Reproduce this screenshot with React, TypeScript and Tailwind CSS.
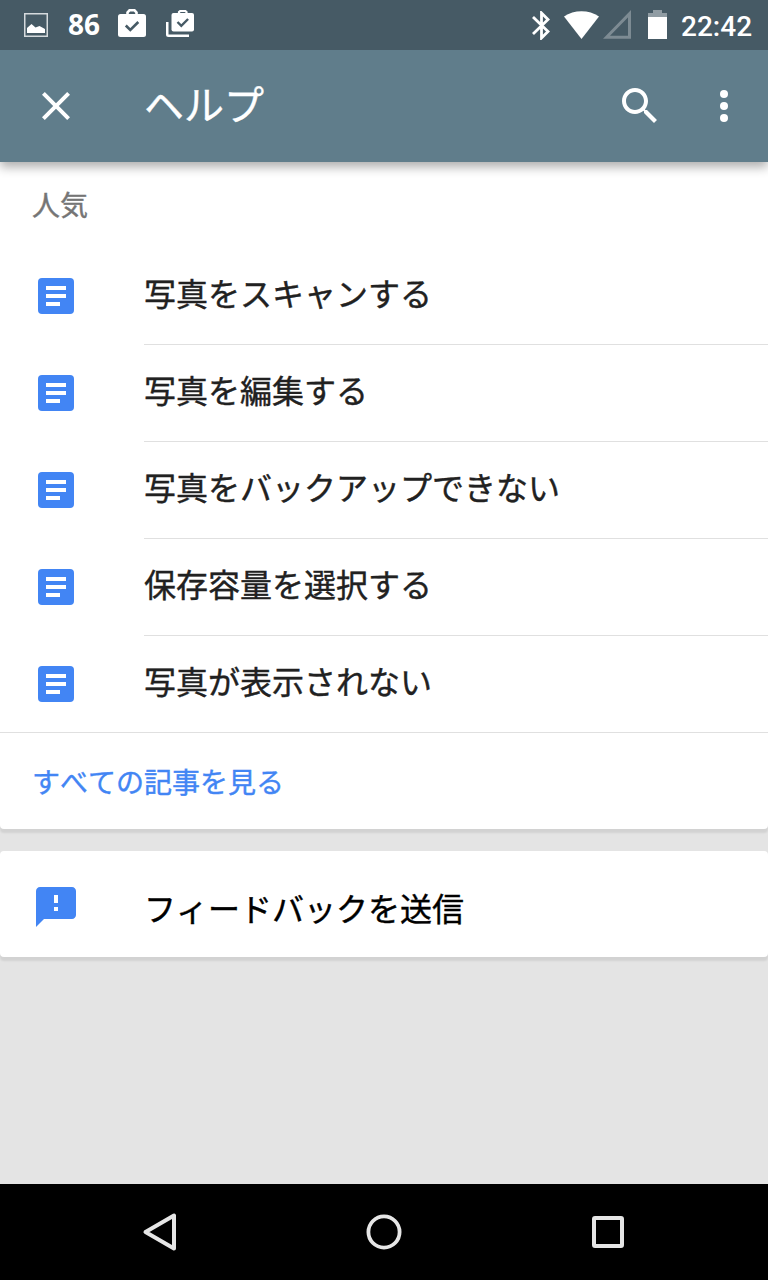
import type { ReactNode } from 'react';

const articles = [
  '写真をスキャンする',
  '写真を編集する',
  '写真をバックアップできない',
  '保存容量を選択する',
  '写真が表示されない',
];

export default function App() {
  return (
    <div
      lang="ja"
      className="flex h-[1280px] w-[768px] flex-col overflow-hidden bg-[#e4e4e4] font-['Noto_Sans_CJK_JP',sans-serif]"
    >
      <StatusBar />
      <AppBar />

      <main className="flex-1">
        {/* Popular articles */}
        <section className="rounded-b-sm bg-white shadow-[0_4px_2px_rgba(0,0,0,0.08)]">
          <h2 className="flex h-[86px] items-center px-8 pb-[3px] text-[28px] leading-none text-[#757575]">
            <Label>人気</Label>
          </h2>
          <ul>
            {articles.map((title, index) => (
              <li key={title} className="flex">
                <div className="flex h-[97px] w-36 items-center pb-px pl-8">
                  <ArticleIcon />
                </div>
                <div
                  className={
                    index < articles.length - 1
                      ? 'flex h-[97px] flex-1 items-center border-b border-[#e0e0e0] pb-2 text-[32px] leading-none text-[#212121]'
                      : 'flex h-[97px] flex-1 items-center pb-[9px] text-[32px] leading-none text-[#212121]'
                  }
                >
                  <Label>{title}</Label>
                </div>
              </li>
            ))}
          </ul>
          <div className="-mt-px flex h-[97px] items-center border-t border-[#e0e0e0] px-8 text-[28px] leading-none text-[#4285f4]">
            <Label>すべての記事を見る</Label>
          </div>
        </section>

        {/* Feedback */}
        <section className="mt-[22px] flex h-[106px] items-center rounded-sm bg-white pt-[6px] shadow-[0_4px_2px_rgba(0,0,0,0.08)]">
          <div className="w-36 pl-8">
            <FeedbackIcon />
          </div>
          <div className="text-[32px] leading-none text-black">
            <Label>フィードバックを送信</Label>
          </div>
        </section>
      </main>

      <NavigationBar />
    </div>
  );
}

function Label({ children }: { children: ReactNode }) {
  return (
    <span className="whitespace-nowrap [-webkit-text-stroke:0.4px_currentColor] [font-kerning:none]">
      {children}
    </span>
  );
}

function StatusBar() {
  return (
    <div className="relative z-20 flex h-[50px] items-center justify-between bg-[#465a65] pl-6 pr-4 text-white">
      <div className="flex items-center">
        <svg className="h-6 w-6" viewBox="0 0 24 24" fill="none">
          <rect x="0.75" y="0.75" width="22.5" height="22.5" stroke="#d5dadd" strokeWidth="1.5" />
          <path d="M3 20V15l4.500-4 4 3.500 4-1.500 5.500 3v4z" fill="currentColor" />
        </svg>
        <span className="-mt-0.5 ml-5 w-8 font-['Noto_Sans',sans-serif] text-[28px] font-bold leading-none">86</span>
        <svg className="-mt-1 ml-[18px] h-7 w-7" viewBox="0 0 28 28" fill="none">
          <rect y="5" width="28" height="23" rx="2.500" fill="currentColor" />
          <path d="M9.500 6V3.500L11.500 1.300h5L18.500 3.500V6" stroke="currentColor" strokeWidth="2.600" />
          <path d="M7.800 16.500l4.500 4.500 8-8" stroke="#465a65" strokeWidth="2.600" />
        </svg>
        <svg className="-mt-0.5 ml-5 h-7 w-7" viewBox="0 0 28 28" fill="none">
          <path d="M1.250 12v12.500c0 .8.400 1.250 1.250 1.250H23" stroke="currentColor" strokeWidth="2.500" />
          <rect x="5.500" y="3" width="22.500" height="18.500" rx="2" fill="currentColor" />
          <path d="M13 4V2L14.500 .8h4.500L20.500 2V4" stroke="currentColor" strokeWidth="2.200" />
          <path d="M11.500 12l3.800 3.800 6.800-6.800" stroke="#465a65" strokeWidth="2.400" />
        </svg>
      </div>

      <div className="flex items-center">
        <svg className="h-[29px] w-[18px]" viewBox="0 0 18 29" fill="none">
          <path d="M1 6l15 14.500-6.500 6.500V2L16 8.500 1 23" stroke="currentColor" strokeWidth="2.800" />
        </svg>
        <svg className="ml-[14px] h-7 w-[35px]" viewBox="0 0 35 28">
          <path d="M0 5.500C10-1.500 25-1.500 35 5.500L17.500 28z" fill="currentColor" />
        </svg>
        <svg className="-mt-px ml-1 h-[29px] w-7" viewBox="0 0 28 29" fill="none">
          <path d="M3.500 27.300L26.500 3.700v23.600z" stroke="#7d8b93" strokeWidth="3" />
        </svg>
        <svg className="-mt-px ml-[17px] h-[29px] w-[19px]" viewBox="0 0 19 29">
          <path d="M0 3h5V0h9v3h5v4H0z" fill="#909ca3" />
          <path d="M0 7h19v22H0z" fill="currentColor" />
        </svg>
        <span className="ml-[14px] mt-[3px] w-[71px] font-['Roboto',sans-serif] text-[28px] font-medium leading-none">
          22:42
        </span>
      </div>
    </div>
  );
}

function AppBar() {
  return (
    <header className="z-10 flex h-28 items-center bg-[#607d8b] text-white shadow-[0_5px_10px_rgba(0,0,0,0.32)]">
      <svg className="ml-8 h-12 w-12" viewBox="0 0 24 24" fill="currentColor">
        <path d="M19 6.410L17.590 5 12 10.590 6.410 5 5 6.410 10.590 12 5 17.590 6.410 19 12 13.410 17.590 19 19 17.590 13.410 12z" />
      </svg>
      <h1 className="ml-16 flex-1 pb-[6px] text-[40px] leading-none">
        <Label>ヘルプ</Label>
      </h1>
      <svg className="h-12 w-12" viewBox="0 0 24 24" fill="currentColor">
        <path d="M15.500 14h-.79l-.28-.27C15.410 12.590 16 11.110 16 9.500 16 5.910 13.090 3 9.500 3S3 5.910 3 9.500 5.910 16 9.500 16c1.610 0 3.090-.59 4.230-1.570l.27.28v.79l5 4.990L20.490 19l-4.990-5zm-6 0C7.010 14 5 11.990 5 9.500S7.010 5 9.500 5 14 7.010 14 9.500 11.990 14 9.500 14z" />
      </svg>
      <svg className="ml-9 mr-5 h-12 w-12" viewBox="0 0 24 24" fill="currentColor">
        <circle cx="12" cy="6" r="2" />
        <circle cx="12" cy="12" r="2" />
        <circle cx="12" cy="18" r="2" />
      </svg>
    </header>
  );
}

function ArticleIcon() {
  return (
    <svg className="h-12 w-12" viewBox="0 0 24 24">
      <rect x="3" y="3" width="18" height="18" rx="2" fill="#4285f4" />
      <path d="M7 7h10v2H7zM7 11h10v2H7zM7 15h7v2H7z" fill="#fff" />
    </svg>
  );
}

function FeedbackIcon() {
  return (
    <svg className="h-12 w-12" viewBox="0 0 24 24" fill="#4285f4">
      <path d="M20 2H4c-1.100 0-1.990.9-1.990 2L2 22l4-4h14c1.100 0 2-.9 2-2V4c0-1.100-.9-2-2-2zm-7 12h-2v-2h2v2zm0-4h-2V6h2v4z" />
    </svg>
  );
}

function NavigationBar() {
  return (
    <nav className="flex h-24 items-center bg-black px-12 text-[#e6e6e6]">
      <div className="flex flex-1 justify-center">
        <svg className="h-12 w-12" viewBox="0 0 48 48" fill="none" stroke="currentColor" strokeWidth="4">
          <path d="M9.500 24L38 7.500v33z" strokeLinejoin="round" />
        </svg>
      </div>
      <div className="flex flex-1 justify-center">
        <svg className="h-12 w-12" viewBox="0 0 48 48" fill="none" stroke="currentColor" strokeWidth="3.800">
          <circle cx="24" cy="24" r="15.600" />
        </svg>
      </div>
      <div className="flex flex-1 justify-center">
        <svg className="h-12 w-12" viewBox="0 0 48 48" fill="none" stroke="currentColor" strokeWidth="4">
          <rect x="10" y="10" width="28" height="28" rx="1" />
        </svg>
      </div>
    </nav>
  );
}
